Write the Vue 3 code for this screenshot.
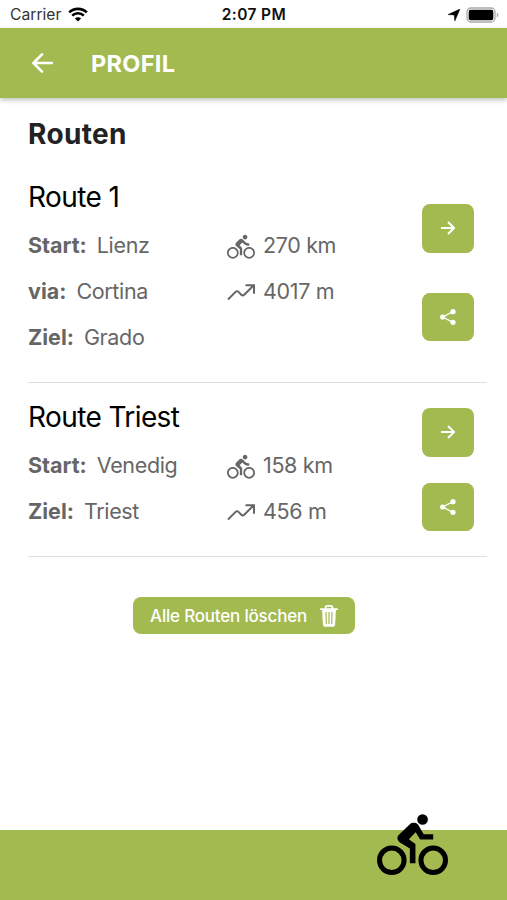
<template>
  <div class="app">
    <div class="status-bar">
      <div class="carrier">
        <span>Carrier</span>
        <svg class="wifi" viewBox="0 0 20 15">
          <path d="M1.2 5.4a12.6 12.6 0 0 1 17.6 0" />
          <path d="M4.2 8.6a8.3 8.3 0 0 1 11.6 0" />
          <path class="dot" d="M10 14.6L6.9 11.5a4.4 4.4 0 0 1 6.2 0z" />
        </svg>
      </div>
      <span class="time">2:07 PM</span>
      <div class="indicators">
        <svg class="location" viewBox="0 0 12 12"><path d="M0 5.6L12 0 6.8 12 6.2 5.9z" /></svg>
        <svg class="battery" viewBox="0 0 33 16">
          <rect class="case" x="1" y="1" width="28" height="14" rx="4" />
          <rect x="2.7" y="2.7" width="24.6" height="10.6" rx="2" />
          <path class="cap" d="M30.8 5.5c2 .8 2 4.2 0 5z" />
        </svg>
      </div>
    </div>

    <header class="toolbar">
      <svg class="back" viewBox="0 0 22 20"><path d="M21 10H2M10.5 1L1.5 10l9 9" /></svg>
      <span class="toolbar-title">PROFIL</span>
    </header>

    <main class="content">
      <h1>Routen</h1>
      <section v-for="route in routes" :key="route.name" class="route" :class="{ short: route.stops.length < 3 }">
        <div class="info">
          <h2>{{ route.name }}</h2>
          <div class="columns">
            <div class="stops">
              <p v-for="stop in route.stops" :key="stop.label"><b>{{ stop.label }}:</b>{{ stop.place }}</p>
            </div>
            <div class="stats">
              <p>
                <svg class="bike" viewBox="0 0 24 24"><path :d="bikePath" /></svg>
                {{ route.distance }} km
              </p>
              <p>
                <svg class="climb" viewBox="0 0 28 17"><path d="M1 15.5l7.6-7.6c.9-.9 2-.9 2.9 0l2.8 2.8c.9.9 2 .9 2.9 0L26.5 1.5M18.5 1.2H27v8.5" /></svg>
                {{ route.climb }} m
              </p>
            </div>
          </div>
        </div>
        <div class="actions">
          <button aria-label="Route öffnen">
            <svg class="open" viewBox="0 0 14 14"><path d="M0 7h12.5M7 1l6 6-6 6" /></svg>
          </button>
          <button aria-label="Route teilen">
            <svg class="share" viewBox="0 0 16 16">
              <path d="M13 2.6L2.7 8 13 13.4" />
              <circle cx="13" cy="2.7" r="2.6" />
              <circle cx="2.7" cy="8" r="2.6" />
              <circle cx="13" cy="13.3" r="2.6" />
            </svg>
          </button>
        </div>
      </section>

      <button class="delete">
        <span>Alle Routen löschen</span>
        <svg class="trash" viewBox="0 0 18 22">
          <path class="lid" d="M.9 4.2h16.2M5.5 4V2.8c0-1.2.7-1.9 1.9-1.9h3.2c1.2 0 1.9.7 1.9 1.9V4" />
          <path class="can" d="M2 4h14l-.9 15.4c-.1 1.6-1 2.4-2.4 2.4H5.3c-1.4 0-2.3-.8-2.4-2.4z" />
          <path class="ribs" d="M6 7l.3 12M9 7v12M12 7l-.3 12" />
        </svg>
      </button>
    </main>

    <footer class="footer">
      <svg class="rider" viewBox="0 0 24 24"><path :d="riderPath" /></svg>
    </footer>
  </div>
</template>

<script setup>
const routes = [
  {
    name: 'Route 1',
    stops: [
      { label: 'Start', place: 'Lienz' },
      { label: 'via', place: 'Cortina' },
      { label: 'Ziel', place: 'Grado' },
    ],
    distance: 270,
    climb: 4017,
  },
  {
    name: 'Route Triest',
    stops: [
      { label: 'Start', place: 'Venedig' },
      { label: 'Ziel', place: 'Triest' },
    ],
    distance: 158,
    climb: 456,
  },
]

const bikePath = 'M15.5 5.5c1.1 0 2-.9 2-2s-.9-2-2-2-2 .9-2 2 .9 2 2 2zM5 12c-2.8 0-5 2.2-5 5s2.2 5 5 5 5-2.2 5-5-2.2-5-5-5zm0 8.5c-1.9 0-3.5-1.6-3.5-3.5s1.6-3.5 3.5-3.5 3.5 1.6 3.5 3.5-1.6 3.5-3.5 3.5zm5.8-10l2.4-2.4.8.8c1.3 1.3 3 2.1 5.1 2.1V9c-1.5 0-2.7-.6-3.6-1.5l-1.9-1.9c-.5-.4-1-.6-1.6-.6s-1.1.2-1.4.6L7.8 8.4c-.4.4-.6.9-.6 1.4 0 .6.2 1.1.6 1.4L11 14v5h2v-6.2l-2.2-2.3zM19 12c-2.8 0-5 2.2-5 5s2.2 5 5 5 5-2.2 5-5-2.2-5-5-5zm0 8.5c-1.9 0-3.5-1.6-3.5-3.5s1.6-3.5 3.5-3.5 3.5 1.6 3.5 3.5-1.6 3.5-3.5 3.5z'

const riderPath = 'M5 20.3a3.3 3.3 0 1 1 0-6.6 3.3 3.3 0 0 1 0 6.6M5 12a5 5 0 1 0 0 10 5 5 0 0 0 0-10M14.6 10H19V8.2h-3.2l-1.94-3.27c-.29-.5-.86-.63-1.46-.63-.47 0-.9.09-1.2.4L7.5 8.29C7.19 8.6 6.9 9 6.9 9.5c0 .63.33 1.16.85 1.47L11.1 13v5H13v-6.5l-2.25-1.65 2.32-2.35M19 20.3a3.3 3.3 0 1 1 0-6.6 3.3 3.3 0 0 1 0 6.6M19 12a5 5 0 1 0 0 10 5 5 0 0 0 0-10M15.4 5a1.8 1.8 0 1 0 0-3.6 1.8 1.8 0 0 0 0 3.6z'
</script>

<style>
body {
  margin: 0;
  background: #fff;
}
</style>

<style scoped>
.app {
  display: flex;
  flex-direction: column;
  height: 100vh;
  min-height: 900px;
  overflow: hidden;
  font-family: Inter, Roboto, sans-serif;
  color: #666;
}

* {
  box-sizing: border-box;
}

svg {
  display: block;
  flex: none;
}

.status-bar {
  display: grid;
  grid-template-columns: 1fr auto 1fr;
  align-items: center;
  height: 28px;
  padding: 1px 8px 0 10px;
  font-size: 15.7px;
  color: #333;
}

.carrier, .indicators {
  display: flex;
  align-items: center;
}

.carrier {
  gap: 7px;
}

.wifi {
  width: 20px;
  height: 15px;
  fill: none;
  stroke: #000;
  stroke-width: 2.7;
}

.wifi .dot {
  fill: #000;
  stroke: none;
}

.time {
  padding-right: 1px;
  font-size: 15.5px;
  font-weight: 600;
  letter-spacing: 0.4px;
  color: #111;
}

.indicators {
  justify-content: flex-end;
  gap: 6px;
}

.location {
  width: 12px;
  height: 12px;
  stroke: #000;
  stroke-width: 0.5;
}

.battery {
  width: 33px;
  height: 16px;
}

.battery .case {
  fill: #fff;
  stroke: #aaa;
  stroke-width: 1.3;
}

.battery .cap {
  fill: #aaa;
}

.toolbar {
  display: flex;
  align-items: center;
  gap: 38px;
  height: 70px;
  padding-left: 32px;
  background: #a3ba50;
  box-shadow: 0 2px 5px rgba(0, 0, 0, 0.25);
  color: #fff;
}

.back {
  width: 21px;
  height: 20px;
  fill: none;
  stroke: #fff;
  stroke-width: 2.7;
  stroke-linecap: round;
  stroke-linejoin: round;
}

.toolbar-title {
  padding-top: 1px;
  font-size: 23.5px;
  font-weight: 700;
  letter-spacing: 0.3px;
}

.content {
  flex: 1;
  padding: 0 20px 0 28px;
}

h1, h2, p {
  margin: 0;
}

h1 {
  padding-top: 18px;
  font-size: 28px;
  line-height: 36px;
  font-weight: 700;
  letter-spacing: 0.35px;
  color: #222;
}

h2 {
  font-size: 28px;
  line-height: 36px;
  font-weight: 400;
  letter-spacing: -0.6px;
  color: #000;
}

.route {
  display: flex;
  justify-content: space-between;
  height: 231px;
  padding-top: 27px;
  border-bottom: 1px solid #ddd;
}

.route.short {
  height: 174px;
  padding-top: 16px;
}

.columns {
  display: flex;
  padding-top: 7px;
}

.stops {
  width: 199px;
}

p {
  display: flex;
  align-items: center;
  height: 46px;
  font-size: 21.5px;
  letter-spacing: -0.35px;
  white-space: nowrap;
}

b {
  margin-right: 10px;
  font-weight: 700;
  letter-spacing: 0;
}

.stats p {
  gap: 8px;
}

.bike {
  width: 28px;
  height: 28px;
  margin-top: 4px;
  fill: #666;
}

.climb {
  width: 28px;
  height: 17px;
  margin-top: 2px;
  fill: none;
  stroke: #666;
  stroke-width: 2;
}

.actions {
  display: flex;
  flex-direction: column;
  gap: 40px;
  padding: 25px 13.5px 0 0;
}

.short .actions {
  gap: 26px;
  padding-top: 9px;
}

button {
  display: flex;
  align-items: center;
  justify-content: center;
  padding: 0;
  border: none;
  border-radius: 8px;
  background: #a3ba50;
  color: #fff;
  font-family: inherit;
}

.actions button {
  width: 52px;
  height: 48.5px;
}

.open {
  width: 14px;
  height: 14px;
  fill: none;
  stroke: #fff;
  stroke-width: 2;
}

.share {
  width: 16px;
  height: 16px;
  fill: #fff;
}

.share path {
  fill: none;
  stroke: #fff;
  stroke-width: 1.3;
}

.delete {
  gap: 13px;
  width: 222px;
  height: 37px;
  margin: 40px 0 0 105px;
  font-size: 17px;
  font-weight: 500;
  letter-spacing: -0.2px;
}

.trash {
  width: 18px;
  height: 22px;
}

.trash .lid {
  fill: none;
  stroke: #fff;
  stroke-width: 1.8;
  stroke-linecap: round;
}

.trash .can {
  fill: #fff;
}

.trash .ribs {
  fill: none;
  stroke: #a3ba50;
  stroke-width: 1.2;
}

.footer {
  height: 70px;
  padding-left: 377px;
  background: #a3ba50;
}

.rider {
  width: 71px;
  height: 71px;
  margin-top: -20px;
}
</style>
